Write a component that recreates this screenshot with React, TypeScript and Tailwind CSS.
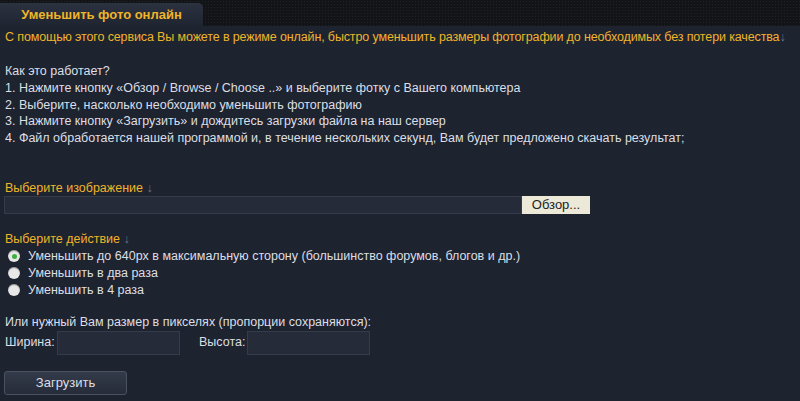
import { useState } from "react";

const steps = [
  "1. Нажмите кнопку «Обзор / Browse / Choose ..» и выберите фотку с Вашего компьютера",
  "2. Выберите, насколько необходимо уменьшить фотографию",
  "3. Нажмите кнопку «Загрузить» и дождитесь загрузки файла на наш сервер",
  "4. Файл обработается нашей программой и, в течение нескольких секунд, Вам будет предложено скачать результат;",
];

const actions = [
  "Уменьшить до 640px в максимальную сторону (большинство форумов, блогов и др.)",
  "Уменьшить в два раза",
  "Уменьшить в 4 раза",
];

const Radio = ({ checked }: { checked: boolean }) => (
  <span className="flex h-[12px] w-[12px] items-center justify-center rounded-full bg-[#e8e8e8] shadow-[inset_0_1px_1px_rgba(0,0,0,0.35)]">
    {checked && <span className="h-[5px] w-[5px] rounded-full bg-[#3fae3f]" />}
  </span>
);

export default function App() {
  const [action, setAction] = useState(0);

  return (
    <div className="h-[401px] w-[800px] overflow-hidden bg-[#1e2330] font-['Liberation_Sans',Arial,sans-serif] text-[12.5px] text-[#dcdfe4]">
      <div className="flex h-[26px] items-end bg-[#121418] bg-[radial-gradient(#1f2227_1px,transparent_1px)] bg-[length:3px_3px]">
        <div className="flex h-[23px] w-[203px] items-center justify-center rounded-tr-[5px] bg-gradient-to-b from-[#2c3240] to-[#1f2431] text-[13px] font-bold text-[#f0b429]">
          Уменьшить фото онлайн
        </div>
      </div>

      <div className="px-[5px]">
        <p className="mt-[3px] whitespace-nowrap leading-[17px] tracking-[-0.13px] text-[#f0b429]">
          С помощью этого сервиса Вы можете в режиме онлайн, быстро уменьшить размеры фотографии до необходимых без потери качества
          <span className="text-[#6b7180]">↓</span>
        </p>

        <div className="mt-[17px] leading-[16.75px]">
          <p>Как это работает?</p>
          {steps.map((s) => (
            <p key={s}>{s}</p>
          ))}
        </div>

        <p className="mt-[33px] leading-[17px] text-[#f0b429]">
          Выберите изображение <span className="text-[#6b7180]">↓</span>
        </p>
        <div className="-ml-px -mt-px flex h-[18px]">
          <div className="w-[518px] border border-[#343b4a] bg-[#252b39]" />
          <button className="flex w-[68px] items-center justify-center bg-[#ece9d8] text-[13px] text-[#222]">
            Обзор...
          </button>
        </div>

        <p className="mt-[17px] leading-[17px] text-[#f0b429]">
          Выберите действие <span className="text-[#6b7180]">↓</span>
        </p>
        <div className="flex flex-col">
          {actions.map((a, i) => (
            <label
              key={a}
              onClick={() => setAction(i)}
              className="flex h-[17px] cursor-pointer items-center gap-[8px] pl-[3px]"
            >
              <Radio checked={action === i} />
              <span>{a}</span>
            </label>
          ))}
        </div>

        <p className="mt-[15px] leading-[17px]">Или нужный Вам размер в пикселях (пропорции сохраняются):</p>
        <div className="flex h-[24px] items-center">
          <span className="w-[52px]">Ширина:</span>
          <div className="h-[24px] w-[123px] border border-[#343b4a] bg-[#252b39]" />
          <span className="ml-[19px] w-[48px]">Высота:</span>
          <div className="h-[24px] w-[123px] border border-[#343b4a] bg-[#252b39]" />
        </div>

        <button className="mt-[16px] -ml-px flex h-[24px] w-[123px] items-center justify-center rounded-[3px] border border-[#4a5262] bg-gradient-to-b from-[#333a49] to-[#262c39] text-[13px] text-[#dcdfe4]">
          Загрузить
        </button>
      </div>
    </div>
  );
}
